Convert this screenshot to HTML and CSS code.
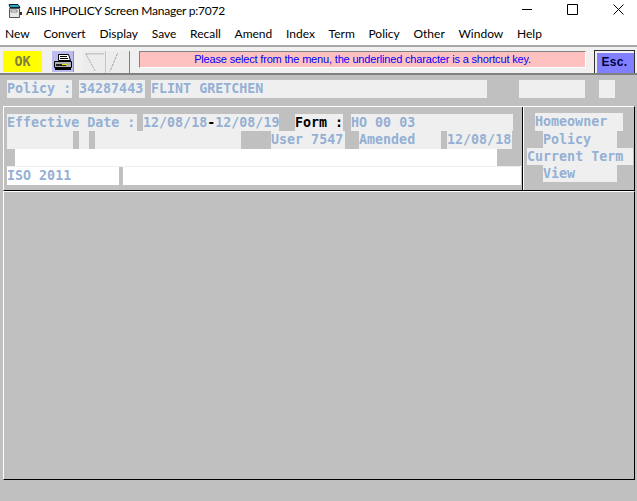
FILE: index.html
```html
<!DOCTYPE html>
<html lang="en">
<head>
    <meta charset="UTF-8">
    <meta name="viewport" content="width=device-width, initial-scale=1.0">
    <title>AIIS IHPOLICY Screen Manager p:7072</title>

    <link rel="stylesheet" href="styles.css">
</head>
<body>

    <div class="titlebar">
        <svg class="app-icon" width="16" height="16" viewBox="0 0 16 16">
            <path d="M2.5 5.5h10v9h-10z" fill="#e8e8e8" stroke="#555"/>
            <path d="M2 1.5h9l2 3H3z" fill="#2aa8b8" stroke="#123"/>
            <path d="M4 7h6v2H4z" fill="#fff" stroke="#888"/>
            <path d="M13 9h2v3h-2z" fill="#333"/>
        </svg>
        <span class="app-title">AIIS IHPOLICY Screen Manager p:7072</span>
        <div class="winctl">
            <svg width="10" height="11" viewBox="0 0 10 11"><path d="M0 5.5h10" stroke="#000"/></svg>
            <svg width="11" height="11" viewBox="0 0 11 11"><path d="M.5.5h10v10H.5z" fill="none" stroke="#000"/></svg>
            <svg width="11" height="11" viewBox="0 0 11 11"><path d="M.5.5l10 10M10.5.5l-10 10" fill="none" stroke="#000"/></svg>
        </div>
    </div>

    <nav class="menubar">
        <span>New</span>
        <span>Convert</span>
        <span>Display</span>
        <span>Save</span>
        <span>Recall</span>
        <span>Amend</span>
        <span>Index</span>
        <span>Term</span>
        <span>Policy</span>
        <span>Other</span>
        <span>Window</span>
        <span>Help</span>
    </nav>

    <div class="toolbar">
        <button class="btn-ok">OK</button>
        <button class="btn-print">
            <svg width="20" height="18" viewBox="0 0 20 18">
                <path d="M5.5 1.5h10l2 6h-12z" fill="#fff" stroke="#000"/>
                <path d="M7 3.5h7M7 5.5h8" stroke="#000"/>
                <path d="M1.5 8.5h17v6h-17z" fill="#b0b0b0" stroke="#000"/>
                <path d="M2 15h16v2H2z" fill="#000"/>
                <path d="M3 11h10v2H3z" fill="#222"/>
                <path d="M9 11h5v1H9z" fill="#e8e800"/>
            </svg>
        </button>
        <div class="nav-btns">
            <svg width="23" height="22" viewBox="0 0 23 22"><path d="M3 2.5h19" stroke="#b0b0b0"/><path d="M3 2.5L13 21" fill="none" stroke="#a0a0a0" stroke-dasharray="2 1"/></svg>
            <svg width="23" height="22" viewBox="0 0 23 22"><path d="M11 2L3 21" fill="none" stroke="#a0a0a0" stroke-dasharray="3 1"/></svg>
        </div>
        <div class="message">Please select from the menu, the underlined character is a shortcut key.</div>
        <button class="btn-esc">Esc.</button>
    </div>

    <main class="screen">
        <div class="policy-row">
            <div class="fld">Policy :</div>
            <div></div>
            <div class="fld">34287443</div>
            <div></div>
            <div class="fld">FLINT GRETCHEN</div>
            <div></div>
            <div class="fld"></div>
            <div></div>
            <div class="fld"></div>
        </div>

        <div class="panels">
            <section class="panel-form">
                <div class="form-row row-dates">
                    <div class="fld">Effective Date :</div>
                    <div></div>
                    <div class="fld">12/08/18<span class="strong">-</span>12/08/19</div>
                    <div></div>
                    <div class="fld strong">Form :</div>
                    <div></div>
                    <div class="fld">HO 00 03</div>
                </div>
                <div class="form-row row-user">
                    <div class="fld"></div>
                    <div></div>
                    <div class="fld"></div>
                    <div></div>
                    <div class="fld"></div>
                    <div></div>
                    <div class="fld">User 7547</div>
                    <div></div>
                    <div class="fld">Amended</div>
                    <div></div>
                    <div class="fld">12/08/18</div>
                </div>
                <div class="form-row row-blank">
                    <div></div>
                    <div class="fld-white"></div>
                </div>
                <div class="form-row row-iso">
                    <div class="fld-white">ISO 2011</div>
                    <div></div>
                    <div class="fld-white"></div>
                </div>
            </section>

            <aside class="panel-side">
                <div class="side-line side-home">Homeowner</div>
                <div class="side-line side-mid">Policy</div>
                <div class="side-line side-term">Current Term</div>
                <div class="side-line side-mid">View</div>
            </aside>
        </div>

        <div class="panel-empty"></div>
    </main>

</body>
</html>
```

FILE: styles.css
```css
* {
    box-sizing: border-box;
}

html, body {
    margin: 0;
    height: 100%;
}

body {
    display: flex;
    flex-direction: column;
    background-color: #c0c0c0;
    font-family: 'Lato', sans-serif;
    font-size: 12px;
    color: #000;
    overflow: hidden;
}

/* title bar */
.titlebar {
    height: 22px;
    display: flex;
    align-items: center;
    background-color: #fff;
    padding-left: 7px;
    flex: none;
}

.app-icon {
    margin-right: 3px;
}

.app-title {
    line-height: 22px;
    letter-spacing: -0.23px;
}

.winctl {
    margin-left: auto;
    display: flex;
    align-items: center;
    gap: 35px;
    padding: 0 13px 4px 0;
}

.winctl svg {
    display: block;
}

/* menu */
.menubar {
    height: 23px;
    display: flex;
    align-items: center;
    gap: 13.7px;
    padding-left: 5px;
    background-color: #fff;
    flex: none;
}

/* toolbar */
.toolbar {
    height: 30px;
    display: flex;
    align-items: flex-start;
    padding-top: 4px;
    background-color: #f0f0f0;
    border-top: 2px solid #a8a8a8;
    border-bottom: 2px solid #808080;
    flex: none;
}

.toolbar button {
    padding: 0;
    font-family: 'DejaVu Sans Mono', monospace;
    font-weight: bold;
    font-size: 13.33px;
}

.btn-ok {
    width: 39px;
    height: 21px;
    margin-left: 3px;
    border: none;
    background-color: #ffff00;
    color: #808040;
}

.btn-print {
    width: 22px;
    height: 21px;
    margin-left: 10px;
    border: none;
    border-right: 1px solid #909090;
    background-color: #bcbcf0;
    display: flex;
    align-items: center;
    justify-content: center;
}

.nav-btns {
    display: flex;
    gap: 1px;
    height: 22px;
    margin-left: 9px;
}

.nav-btns svg {
    display: block;
    background-color: #ececec;
    border-right: 1px solid #c4c4c4;
}

.nav-btns svg:last-child {
    border-right-color: #808080;
}

.message {
    width: 447px;
    height: 17px;
    margin-left: 9px;
    border-top: 1px solid #808080;
    border-left: 1px solid #808080;
    border-right: 1px solid #fff;
    border-bottom: 1px solid #fff;
    background-color: #ffc0c0;
    color: #0000ff;
    font-family: 'Liberation Sans', sans-serif;
    font-size: 11px;
    letter-spacing: -0.17px;
    text-align: center;
    line-height: 15px;
    white-space: nowrap;
}

.toolbar .btn-esc {
    width: 41px;
    height: 23px;
    margin-left: 8px;
    margin-top: -1px;
    border: 1px solid #303030;
    border-bottom: none;
    box-shadow: inset 1px 1px 0 1px #f0f0f0;
    background-color: #8080ff;
    color: #000040;
    font-family: 'Liberation Sans', sans-serif;
    font-size: 12px;
    letter-spacing: 0.3px;
}

/* legacy character screen */
.screen {
    flex: 1;
    display: flex;
    flex-direction: column;
    padding: 5px 2px 21px 3px;
    font-family: 'DejaVu Sans Mono', monospace;
    font-weight: bold;
    font-size: 13.33px;
    color: #94b0d4;
}

.fld, .fld-white, .side-line {
    line-height: 17px;
    white-space: pre;
    overflow: hidden;
}

.fld, .side-line {
    background-color: #efefef;
}

.fld-white {
    background-color: #fff;
}

.strong {
    color: #000;
}

.policy-row {
    display: grid;
    grid-template-columns: 65px 7px 66px 6px 336px 32px 66px 14px 16px;
    height: 18px;
    margin-left: 4px;
    flex: none;
}

.panels {
    display: flex;
    height: 85px;
    margin-top: 8px;
    flex: none;
    border-top: 1px solid #fff;
    border-left: 1px solid #fff;
    border-bottom: 1px solid #000;
    border-right: 1px solid #000;
}

.panel-form {
    width: 519px;
    padding: 7px 0 0 3px;
    border-right: 1px solid #000;
}

.form-row {
    display: grid;
    height: 17px;
}

.row-dates {
    grid-template-columns: 130px 6px 136px 16px 48px 8px 162px;
}

.row-user {
    grid-template-columns: 66px 6px 10px 6px 146px 30px 74px 14px 82px 6px 65px;
    height: 18px;
}

.row-blank {
    grid-template-columns: 8px 482px;
}

.row-iso {
    grid-template-columns: 112px 4px 398px;
    height: 19px;
    border-top: 1px solid #efefef;
}

.panel-side {
    flex: 1;
    border-left: 1px solid #fff;
    padding-top: 6px;
}

.side-line {
    height: 17px;
}

.side-home {
    margin-left: 11px;
    width: 88px;
    height: 18px;
}

.side-mid {
    margin-left: 19px;
    width: 74px;
}

.side-term {
    margin-left: 3px;
    width: 106px;
}

.panel-empty {
    flex: 1;
    border-top: 1px solid #fff;
    border-left: 1px solid #fff;
    border-bottom: 1px solid #000;
    border-right: 1px solid #000;
}
```
